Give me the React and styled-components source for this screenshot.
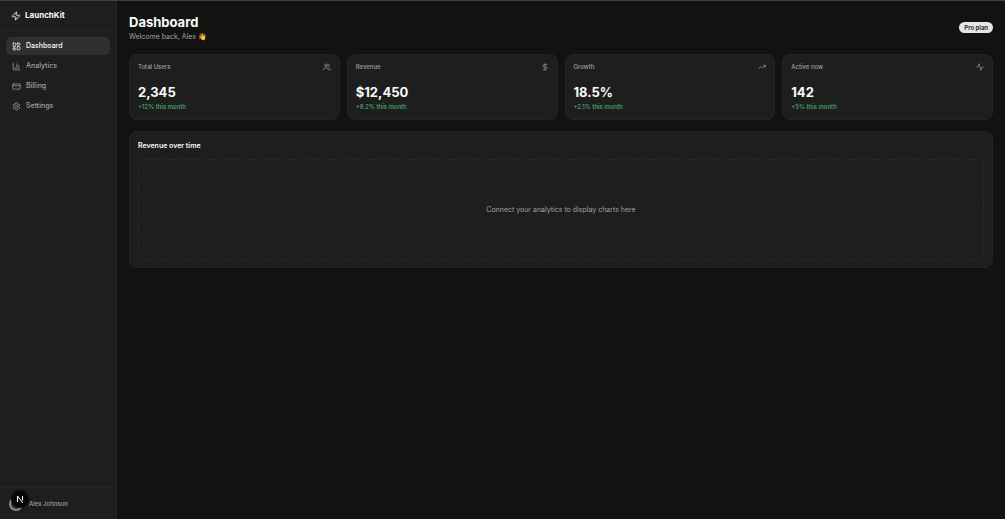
import React from "react";
import styled, { createGlobalStyle } from "styled-components";
import {
  Activity,
  ChartColumn,
  CreditCard,
  DollarSign,
  LayoutDashboard,
  Settings,
  TrendingUp,
  Users,
  Zap,
} from "lucide-react";

const GlobalStyle = createGlobalStyle`
  * {
    box-sizing: border-box;
  }

  body {
    margin: 0;
    background: #121212;
    color: #fafafa;
    font-family: Inter, "Noto Sans", sans-serif;
    font-size: 7px;
    line-height: 10px;
  }

  h1, h2, p {
    margin: 0;
  }
`;

const Layout = styled.div`
  display: flex;
  min-height: 100vh;
  border-top: 1px solid #3a4341;
`;

const Sidebar = styled.aside`
  display: flex;
  flex-direction: column;
  flex: 0 0 117px;
  background: #1e1e1e;
  border-right: 1px solid #262626;
`;

const Brand = styled.a`
  display: flex;
  align-items: center;
  gap: 4px;
  height: 30px;
  padding: 0 11px;
  border-bottom: 1px solid #252525;
  color: #fafafa;
  font-size: 8px;
  font-weight: 700;
  line-height: 11px;
  text-decoration: none;
`;

const Nav = styled.nav`
  display: flex;
  flex-direction: column;
  flex: 1;
  gap: 2px;
  padding: 6px;
`;

const NavLink = styled.a`
  display: flex;
  align-items: center;
  gap: 5px;
  height: 18px;
  padding: 0 6px;
  border-radius: 5px;
  background: ${(props) => (props.$active ? "#303030" : "transparent")};
  color: ${(props) => (props.$active ? "#fafafa" : "#a1a1a1")};
  font-weight: 500;
  text-decoration: none;
`;

const Account = styled.div`
  display: flex;
  align-items: center;
  position: relative;
  gap: 6px;
  height: 32px;
  padding: 0 9px;
  border-top: 1px solid #252525;
  color: #a1a1a1;
  font-size: 6px;
  font-weight: 500;
`;

const Avatar = styled.span`
  width: 14px;
  height: 14px;
  border: 2px solid #8a8a8a;
  border-radius: 50%;
  background: #303030;
`;

const DevBadge = styled.button`
  position: absolute;
  top: 2px;
  left: 11px;
  width: 18px;
  height: 18px;
  padding: 0;
  border: 0;
  border-radius: 50%;
  background: #080808;

  svg {
    display: block;
  }
`;

const Main = styled.main`
  flex: 1;
  min-width: 0;
  padding: 12px;
`;

const Header = styled.header`
  display: flex;
  align-items: center;
  justify-content: space-between;
  margin-bottom: 12px;
`;

const Title = styled.h1`
  font-size: 13px;
  font-weight: 700;
  line-height: 18px;
`;

const Muted = styled.p`
  color: #a1a1a1;
  line-height: 11px;
`;

const Plan = styled.span`
  padding: 0 5px;
  border-radius: 6px;
  background: #e5e5e5;
  color: #171717;
  font-size: 6px;
  font-weight: 600;
  line-height: 11px;
`;

const Stats = styled.section`
  display: grid;
  grid-template-columns: repeat(4, 1fr);
  gap: 7px;
  margin-bottom: 11px;
`;

const Card = styled.article`
  padding: 8px 8px 7px;
  border: 1px solid #242424;
  border-radius: 8px;
  background: #1e1e1e;
`;

const CardHeader = styled.div`
  display: flex;
  align-items: center;
  justify-content: space-between;
  height: 8px;
  margin-bottom: 11px;
  color: #a1a1a1;
`;

const Label = styled.h2`
  font-size: 6px;
  font-weight: 500;
`;

const Value = styled.p`
  font-size: 13px;
  font-weight: 700;
  line-height: 20px;
`;

const Change = styled.p`
  color: #4caf6e;
  font-size: 6px;
  font-weight: 500;
`;

const ChartTitle = styled.h2`
  margin-bottom: 8px;
  font-size: 7px;
  font-weight: 600;
  line-height: 11px;
`;

const Placeholder = styled.div`
  display: flex;
  align-items: center;
  justify-content: center;
  height: 101px;
  border: 1px dashed #292929;
  border-radius: 5px;
  color: #a1a1a1;
`;

const links = [
  { label: "Dashboard", icon: LayoutDashboard, active: true },
  { label: "Analytics", icon: ChartColumn },
  { label: "Billing", icon: CreditCard },
  { label: "Settings", icon: Settings },
];

const stats = [
  { label: "Total Users", value: "2,345", change: "+12% this month", icon: Users },
  { label: "Revenue", value: "$12,450", change: "+8.2% this month", icon: DollarSign },
  { label: "Growth", value: "18.5%", change: "+2.1% this month", icon: TrendingUp },
  { label: "Active now", value: "142", change: "+5% this month", icon: Activity },
];

function StatCard({ label, value, change, icon: Icon }) {
  return (
    <Card>
      <CardHeader>
        <Label>{label}</Label>
        <Icon size={8} />
      </CardHeader>
      <Value>{value}</Value>
      <Change>{change}</Change>
    </Card>
  );
}

export default function App() {
  return (
    <>
      <GlobalStyle />
      <Layout>
        <Sidebar>
          <Brand href="#">
            <Zap size={10} />
            LaunchKit
          </Brand>
          <Nav>
            {links.map(({ label, icon: Icon, active }) => (
              <NavLink key={label} href="#" $active={active}>
                <Icon size={9} />
                {label}
              </NavLink>
            ))}
          </Nav>
          <Account>
            <Avatar />
            Alex Johnson
            <DevBadge aria-label="Open developer tools">
              <svg width="18" height="18" viewBox="0 0 18 18" fill="none">
                <path d="M6.5 12V6L11.8 13" stroke="#fff" />
                <path d="M11.5 6V10.5" stroke="#fff" />
              </svg>
            </DevBadge>
          </Account>
        </Sidebar>
        <Main>
          <Header>
            <div>
              <Title>Dashboard</Title>
              <Muted>Welcome back, Alex 👋</Muted>
            </div>
            <Plan>Pro plan</Plan>
          </Header>
          <Stats>
            {stats.map((stat) => (
              <StatCard key={stat.label} {...stat} />
            ))}
          </Stats>
          <Card>
            <ChartTitle>Revenue over time</ChartTitle>
            <Placeholder>Connect your analytics to display charts here</Placeholder>
          </Card>
        </Main>
      </Layout>
    </>
  );
}
